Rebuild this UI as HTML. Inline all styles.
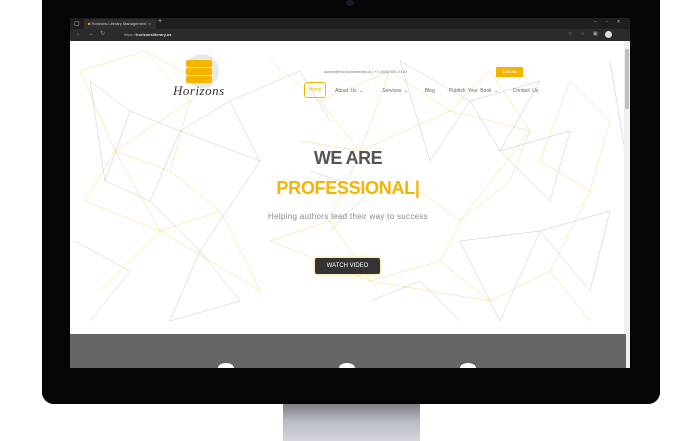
<!DOCTYPE html>
<html><head><meta charset="utf-8"><style>
*{margin:0;padding:0;box-sizing:border-box}
body{width:700px;height:441px;background:#fff;position:relative;overflow:hidden;font-family:"Liberation Sans",sans-serif}
.abs{position:absolute}
</style></head><body>
<div class="abs" style="left:283px;top:400px;width:137px;height:41px;background:linear-gradient(#6a6d75,#b8bac2 50%,#d4d6dc)"></div>
<div class="abs" style="left:42px;top:-20px;width:618px;height:424px;background:#050507;border-radius:0 0 12px 12px"></div>
<div class="abs" style="left:346px;top:0;width:8px;height:6px;border-radius:50%;background:#1a1a2a"></div>
<div class="abs" style="left:70px;top:18px;width:560px;height:11px;background:#1f1f1f"></div>
<div class="abs" style="left:84px;top:19px;width:72px;height:10px;background:#2e2e2e;color:#ccc;font-size:4px;line-height:10px;padding-left:4px"><span style="color:#f5b400">■</span> Horizons Literary Management&nbsp; ×</div>
<div class="abs" style="left:74px;top:20px;color:#bbb;font-size:6px">▢</div>
<div class="abs" style="left:158px;top:18px;color:#bbb;font-size:7px">+</div>
<div class="abs" style="left:594px;top:19px;color:#aaa;font-size:5px;letter-spacing:9px">–▫✕</div>
<div class="abs" style="left:70px;top:29px;width:560px;height:12px;background:#2b2b2b"></div>
<div class="abs" style="left:76px;top:30px;color:#999;font-size:6px;letter-spacing:6px">←→↻</div>
<div class="abs" style="left:124px;top:32px;color:#aaa;font-size:4px">https://<b style="color:#ddd">horizonsliterary.us</b></div>
<div class="abs" style="left:568px;top:31px;color:#aaa;font-size:5px;letter-spacing:8px">☆☆▣</div>
<div class="abs" style="left:605px;top:31px;width:7px;height:7px;border-radius:50%;background:#ddd"></div>
<div class="abs" style="left:70px;top:41px;width:560px;height:293px;background:#fff;overflow:hidden">
<svg width="560" height="293" style="position:absolute;left:0;top:0" stroke-width="0.5" fill="none">
<g stroke="#f2c94c" opacity="0.7">
<path d="M10 30 L75 10 L120 60 L45 110 L10 30 M75 10 L140 45 L120 60 M45 110 L100 130 L120 60 M15 160 L45 110 L90 190 L15 160 M90 190 L150 170 L100 130 M150 170 L190 250 L90 190 M30 250 L90 190 M200 20 L250 60 L320 30 L290 110 L250 60 M320 30 L380 70 L290 110 M380 70 L420 30 L460 90 L380 70 M460 90 L440 140 L390 180 L460 90 M200 200 L260 180 L300 240 L200 200 M300 240 L370 220 L420 260 L300 240 M420 260 L480 230 L520 280 M350 150 L390 180 L370 220 M230 100 L290 110 L260 180 M500 40 L540 80 L520 150 L470 120 L500 40 M520 150 L480 230"/>
</g>
<g stroke="#999" opacity="0.55">
<path d="M20 40 L60 70 L35 140 L20 40 M60 70 L110 90 L80 160 L35 140 M110 90 L160 60 L190 120 L110 90 M80 160 L130 210 L190 120 M130 210 L170 260 L100 280 L130 210 M160 60 L230 30 L260 80 M330 20 L400 60 L360 120 L330 20 M400 60 L470 40 L430 110 L400 60 M430 110 L500 90 L480 160 L430 110 M470 190 L540 170 L520 250 L470 190 M390 200 L470 190 L430 280 L390 200 M300 260 L350 240 L390 280 M240 130 L300 150 L260 190 M540 20 L555 110 M5 200 L60 230 L20 280"/>
</g>
</svg>
<div class="abs" style="left:115px;top:13px;width:34px;height:34px;border-radius:50%;background:#e8e8e8"></div>
<div class="abs" style="left:116px;top:19px;width:26px;height:7px;background:#f5b400;border-radius:2px"></div>
<div class="abs" style="left:116px;top:27px;width:26px;height:7px;background:#f5b400;border-radius:2px"></div>
<div class="abs" style="left:116px;top:35px;width:26px;height:7px;background:#f5b400;border-radius:2px"></div>
<div class="abs" style="left:103px;top:42px;font-family:'Liberation Serif',serif;font-style:italic;font-size:13px;color:#333;letter-spacing:0.5px">Horizons</div>
<div class="abs" style="left:254px;top:28px;font-size:4px;color:#777">admin@horizonsliterary.us | +1 (800) 691 5131</div>
<div class="abs" style="left:426px;top:26px;width:27px;height:10px;background:#f5b400;color:#fff;font-size:4px;font-weight:bold;text-align:center;line-height:10px">LOG IN</div>
<div class="abs" style="left:234px;top:41px;width:22px;height:16px;border:1px solid #f5b400;border-radius:3px;color:#f5b400;font-size:5px;text-align:center;line-height:14px">Home</div>
<div class="abs" style="left:265px;top:47px;font-size:5px;color:#666;word-spacing:1px;white-space:pre">About Us ⌄        Services ⌄       Blog      Publish Your Book ⌄      Contact Us</div>
<div class="abs" style="left:0;top:107px;width:556px;text-align:center;font-size:18px;font-weight:bold;color:#555;letter-spacing:-0.5px">WE ARE</div>
<div class="abs" style="left:0;top:137px;width:556px;text-align:center;font-size:18px;font-weight:bold;color:#f5b400;letter-spacing:-0.3px">PROFESSIONAL|</div>
<div class="abs" style="left:0;top:171px;width:556px;text-align:center;font-size:8px;color:#888;letter-spacing:0.3px">Helping authors lead their way to success</div>
<div class="abs" style="left:245px;top:217px;width:65px;height:16px;background:#333;border-radius:2px;box-shadow:0 0 4px #f5d060;color:#fff;font-size:6px;text-align:center;line-height:16px">WATCH VIDEO</div>
<div class="abs" style="left:554px;top:0;width:6px;height:293px;background:#f1f1f1"></div>
<div class="abs" style="left:555px;top:8px;width:4px;height:60px;background:#c1c1c1"></div>
</div>
<div class="abs" style="left:70px;top:334px;width:556px;height:34px;background:#666"></div>
<div class="abs" style="left:626px;top:334px;width:4px;height:34px;background:#f1f1f1"></div>
<div class="abs" style="left:218px;top:363px;width:16px;height:10px;border-radius:50%;background:#fff"></div>
<div class="abs" style="left:339px;top:363px;width:16px;height:10px;border-radius:50%;background:#fff"></div>
<div class="abs" style="left:460px;top:363px;width:16px;height:10px;border-radius:50%;background:#fff"></div>
<div class="abs" style="left:42px;top:368px;width:618px;height:36px;background:#050507;border-radius:0 0 12px 12px"></div>
</body></html>
